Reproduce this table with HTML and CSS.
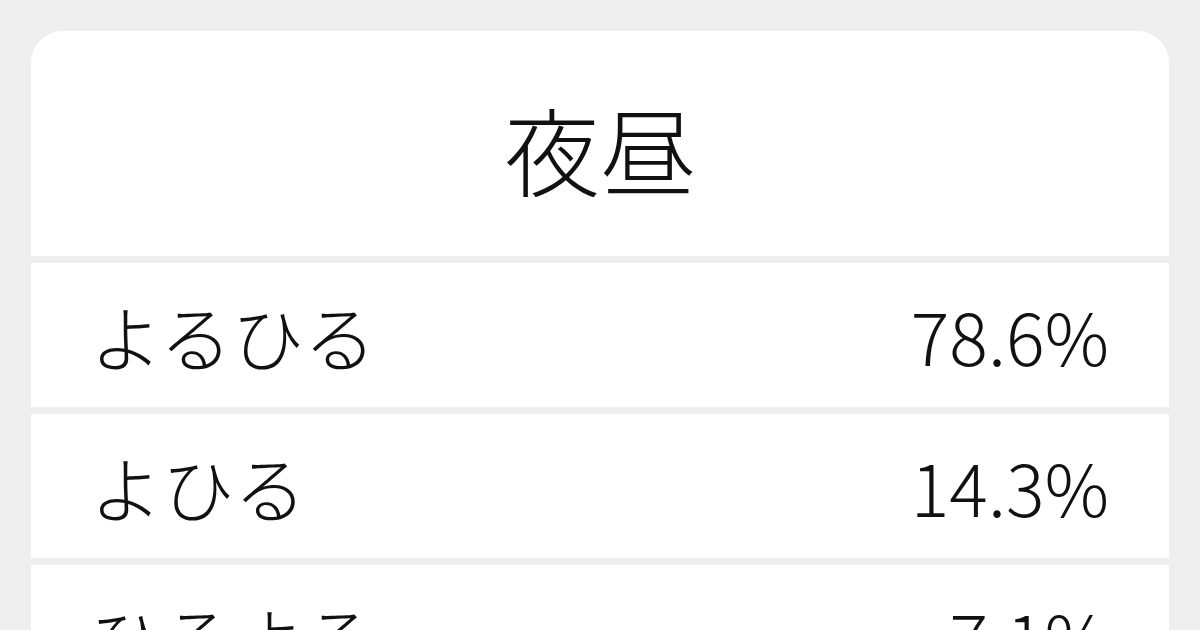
FILE: index.html
```html
<!DOCTYPE html>
<html lang="ja">
<head>
<meta charset="utf-8">
<link rel="stylesheet" href="styles.css">
</head>
<body>
<div class="card">
  <div class="title">夜昼</div>
  <div class="row"><span>よるひる</span><span>78.6%</span></div>
  <div class="row"><span>よひる</span><span>14.3%</span></div>
  <div class="row"><span>ひるよる</span><span>7.1%</span></div>
</div>
</body>
</html>
```

FILE: styles.css
```css
html, body {
  margin: 0;
  padding: 0;
  background: #eeeeee;
  height: 630px;
  overflow: hidden;
}
body {
  padding: 31px 31px 0 31px;
  font-family: "Noto Sans CJK JP Light", "Noto Sans CJK JP", "Noto Sans", sans-serif;
  font-weight: 300;
  color: #111111;
}
.card {
  display: flex;
  flex-direction: column;
  gap: 7px;
}
.title {
  background: #ffffff;
  border-radius: 32px 32px 0 0;
  height: 225px;
  display: flex;
  align-items: center;
  justify-content: center;
  font-size: 96px;
  line-height: 1;
  padding-top: 8px;
  box-sizing: border-box;
}
.row {
  background: #ffffff;
  height: 144px;
  display: flex;
  align-items: center;
  justify-content: space-between;
  padding: 0 60px 0 59px;
  font-size: 72px;
  line-height: 1;
  flex-shrink: 0;
}
```
